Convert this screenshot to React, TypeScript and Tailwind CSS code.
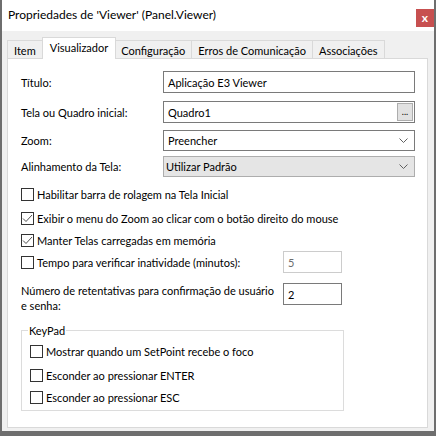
import React from "react";

const Check = ({ checked = false }: { checked?: boolean }) => (
  <div className="w-[13px] h-[13px] border border-[#333333] bg-white shrink-0 flex items-center justify-center">
    {checked && (
      <svg width="11" height="11" viewBox="0 0 11 11">
        <polyline points="1,5.5 4,8.5 10,2" fill="none" stroke="#505050" strokeWidth="1" />
      </svg>
    )}
  </div>
);

const Chevron = () => (
  <svg width="9" height="5" viewBox="0 0 9 5" className="shrink-0">
    <polyline points="0.5,0.5 4.5,4.5 8.5,0.5" fill="none" stroke="#606060" strokeWidth="1" />
  </svg>
);

const tabs = ["Item", "Visualizador", "Configuração", "Erros de Comunicação", "Associações"];

export default function App() {
  return (
    <div className="w-[436px] h-[436px] flex flex-col bg-[#f0f0f0] border-x-2 border-b-[5px] border-[#6e6e6e] text-[11px] text-black font-['Lato',sans-serif] leading-none overflow-hidden">
      {/* Title bar */}
      <div className="h-[31px] bg-white flex items-start justify-between shrink-0">
        <span className="pl-[6px] pt-[9px] text-[12px]">Propriedades de 'Viewer' (Panel.Viewer)</span>
        <div className="mt-[9px] w-[18px] h-[18px] bg-[#c75050] text-white font-bold text-[12px] flex items-center justify-center">x</div>
      </div>

      {/* Tabs */}
      <div className="h-[27px] flex items-end pl-[5px] shrink-0">
        {tabs.map((t, i) =>
          i === 1 ? (
            <div
              key={t}
              className="h-[22px] -mb-px relative z-10 bg-white border border-b-0 border-[#d9d9d9] px-[7px] pt-[4px] -mx-[1px]"
            >
              {t}
            </div>
          ) : (
            <div
              key={t}
              className="h-[18px] bg-[#f0f0f0] border border-b-0 border-[#d9d9d9] px-[6px] pt-[4px] -ml-px first:ml-0"
            >
              {t}
            </div>
          )
        )}
      </div>

      {/* Panel */}
      <div className="ml-[5px] w-[421px] h-[370px] bg-white border border-[#d9d9d9] pl-[13px] pr-[12px] pt-[12px] flex flex-col shrink-0">
        <div className="flex items-center h-[22px]">
          <span className="w-[142px]">Título:</span>
          <div className="flex-1 h-[22px] border border-[#7a7a7a] flex items-center pl-[4px]">Aplicação E3 Viewer</div>
        </div>
        <div className="flex items-center h-[22px] mt-[8px]">
          <span className="w-[142px]">Tela ou Quadro inicial:</span>
          <div className="flex-1 h-[22px] border border-[#7a7a7a] flex items-center pl-[4px] pr-[1px]">
            <span className="flex-1">Quadro1</span>
            <div className="w-[16px] h-[18px] bg-[#e1e1e1] border border-[#adadad] flex items-end justify-center pb-[4px] text-[9px]">...</div>
          </div>
        </div>
        <div className="flex items-center h-[21px] mt-[7px]">
          <span className="w-[142px]">Zoom:</span>
          <div className="flex-1 h-[21px] border border-[#7a7a7a] flex items-center pl-[4px] pr-[6px]">
            <span className="flex-1">Preencher</span>
            <Chevron />
          </div>
        </div>
        <div className="flex items-center h-[21px] mt-[5px]">
          <span className="w-[142px]">Alinhamento da Tela:</span>
          <div className="flex-1 h-[21px] bg-[#e5e5e5] border border-[#adadad] flex items-center pl-[2px] pr-[6px]">
            <span className="flex-1">Utilizar Padrão</span>
            <Chevron />
          </div>
        </div>

        <div className="flex items-center gap-[3px] mt-[10px] h-[14px]">
          <Check />
          <span>Habilitar barra de rolagem na Tela Inicial</span>
        </div>
        <div className="flex items-center gap-[3px] mt-[10px] h-[14px]">
          <Check checked />
          <span>Exibir o menu do Zoom ao clicar com o botão direito do mouse</span>
        </div>
        <div className="flex items-center gap-[3px] mt-[8px] h-[14px]">
          <Check checked />
          <span>Manter Telas carregadas em memória</span>
        </div>
        <div className="flex items-center mt-[4px] h-[22px]">
          <div className="w-[262px] flex items-center gap-[3px]">
            <Check />
            <span>Tempo para verificar inatividade (minutos):</span>
          </div>
          <div className="w-[59px] h-[22px] border border-[#cccccc] flex items-center pl-[4px] text-[#6d6d6d]">5</div>
        </div>
        <div className="flex items-start mt-[7px]">
          <div className="w-[262px] leading-[15px] pt-[3px]">
            Número de retentativas para confirmação de usuário
            <br />
            e senha:
          </div>
          <div className="w-[59px] h-[22px] mt-[3px] border border-[#7a7a7a] flex items-center pl-[4px]">2</div>
        </div>

        <fieldset className="mt-[12px] w-[323px] h-[86px] border border-[#dcdcdc] pl-[8px] flex flex-col">
          <legend className="px-[1px] -ml-[2px]">KeyPad</legend>
          <div className="flex items-center gap-[3px] mt-[8px] h-[14px]">
            <Check />
            <span>Mostrar quando um SetPoint recebe o foco</span>
          </div>
          <div className="flex items-center gap-[3px] mt-[10px] h-[14px]">
            <Check />
            <span>Esconder ao pressionar ENTER</span>
          </div>
          <div className="flex items-center gap-[3px] mt-[8px] h-[14px]">
            <Check />
            <span>Esconder ao pressionar ESC</span>
          </div>
        </fieldset>
      </div>
    </div>
  );
}
